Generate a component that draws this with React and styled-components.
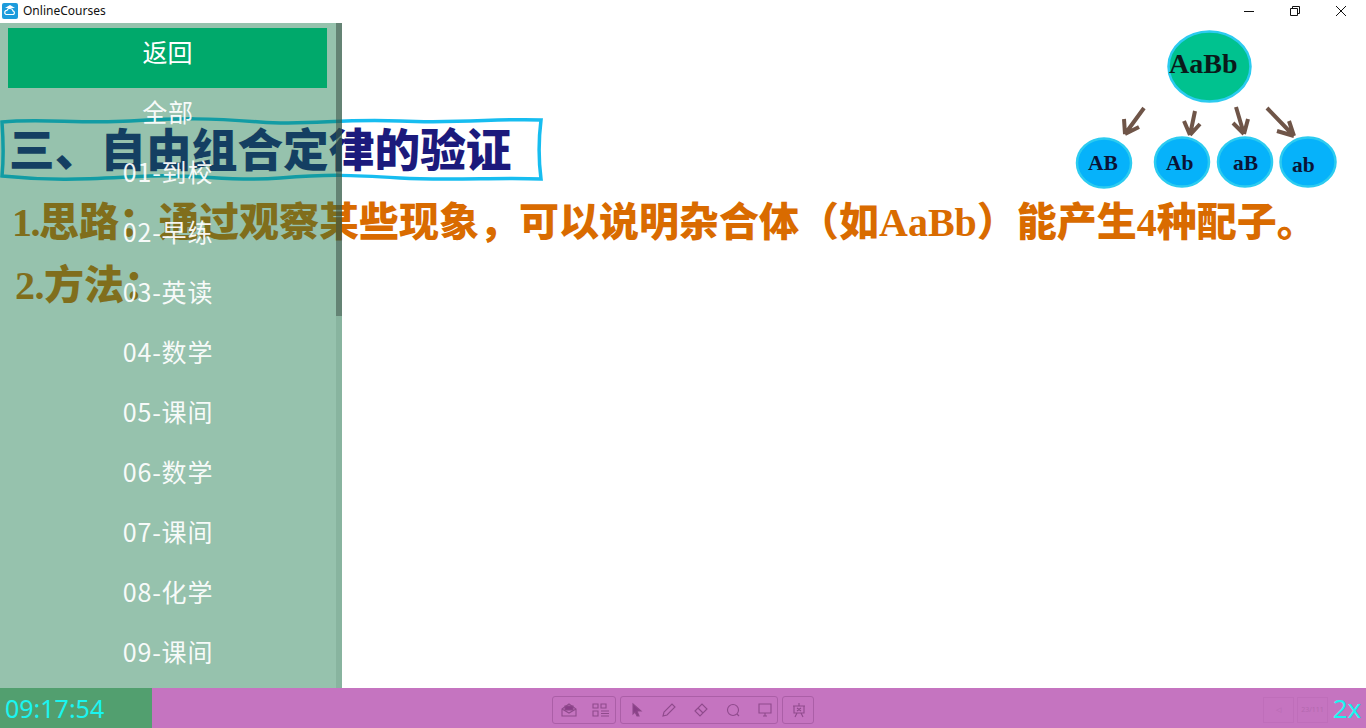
import React from 'react'
import styled, { createGlobalStyle } from 'styled-components'

const cjk = '"Noto Sans CJK SC", "Noto Sans", sans-serif'
const serif = '"Liberation Serif", "Noto Serif CJK SC", serif'

const GlobalStyle = createGlobalStyle`
  html, body {
    margin: 0;
    padding: 0;
    background: #fff;
    overflow: hidden;
  }
`

const Window = styled.div`
  width: 1366px;
  height: 728px;
  display: flex;
  flex-direction: column;
  font-family: ${cjk};
  background: #fff;
`

const TitleBar = styled.div`
  height: 23px;
  flex: none;
  box-sizing: border-box;
  padding: 0 2px 2px 0;
  display: flex;
  align-items: center;
  background: #fff;
`

const AppName = styled.span`
  margin-left: 3px;
  font-family: "Noto Sans", sans-serif;
  font-size: 12px;
  color: #111;
  flex: 1;
`

const WinButton = styled.div`
  width: 46px;
  height: 21px;
  display: flex;
  align-items: center;
  justify-content: center;
`

const Stage = styled.div`
  flex: 1;
  position: relative;
  overflow: hidden;
  background: #fff;
`

const HeadingBox = styled.svg`
  position: absolute;
  left: 0;
  top: 93px;
`

const Heading = styled.div`
  position: absolute;
  left: 9px;
  top: 94px;
  font-size: 45.7px;
  line-height: 60px;
  font-weight: 900;
  color: #1c1a7c;
  white-space: nowrap;
`

const Point = styled.div`
  position: absolute;
  left: ${(p) => p.x}px;
  top: ${(p) => p.y}px;
  font-size: 40px;
  line-height: 46px;
  font-weight: 900;
  color: ${(p) => p.color};
  white-space: nowrap;
`

const Latin = styled.span`
  font-family: ${serif};
  font-weight: 700;
  letter-spacing: ${(p) => p.tight || 0}px;
`

const Tree = styled.svg`
  position: absolute;
  left: 1060px;
  top: -23px;
`

const Sidebar = styled.div`
  position: absolute;
  left: 0;
  top: 0;
  bottom: 0;
  width: 342px;
  background: rgba(11, 113, 65, 0.43);
  overflow: hidden;
`

const Thumb = styled.div`
  position: absolute;
  right: 0;
  top: 0;
  width: 6px;
  height: 293px;
  background: rgba(60, 80, 70, 0.55);
`

const Track = styled.div`
  position: absolute;
  right: 0;
  top: 293px;
  bottom: 0;
  width: 6px;
  background: rgba(60, 100, 80, 0.15);
`

const BackButton = styled.div`
  margin: 5px 0 0 8px;
  width: 319px;
  height: 60px;
  box-sizing: border-box;
  padding-bottom: 14px;
  display: flex;
  align-items: center;
  justify-content: center;
  background: #00a96b;
  color: #fff;
  font-size: 25px;
`

const MenuItem = styled.div`
  width: 336px;
  height: 60px;
  box-sizing: border-box;
  padding-bottom: 14px;
  display: flex;
  align-items: center;
  justify-content: center;
  color: #fff;
  font-size: 25px;
  letter-spacing: 0.8px;
  opacity: 0.93;
`

const BottomBar = styled.div`
  height: 40px;
  flex: none;
  display: flex;
  align-items: center;
  background: #c574c0;
  position: relative;
`

const Clock = styled.div`
  width: 152px;
  height: 40px;
  flex: none;
  box-sizing: border-box;
  padding-left: 5px;
  display: flex;
  align-items: center;
  background: #529f6f;
  color: #1af5f0;
  font-family: "Noto Sans", sans-serif;
  font-size: 25px;
`

const Tools = styled.div`
  flex: 1;
  display: flex;
  gap: 4px;
  margin-left: 400px;
  padding-top: 3px;
`

const ToolGroup = styled.div`
  width: ${(p) => p.w}px;
  height: 28px;
  display: flex;
  align-items: center;
  box-sizing: border-box;
  border: 1px solid #ab5fa7;
  border-radius: 3px;
`

const ToolIcon = styled.svg`
  width: 32px;
  height: 20px;
  flex: none;
  fill: none;
  stroke: #8f4a8c;
  stroke-width: 1.1;
`

const PagerRow = styled.div`
  display: flex;
  gap: 3px;
  padding-top: 3px;
`

const PageBox = styled.div`
  width: 31px;
  height: 26px;
  box-sizing: border-box;
  border: 1px solid #bf6eba;
  display: flex;
  align-items: center;
  justify-content: center;
  font-size: 7px;
  color: #b468af;
  font-family: "Noto Sans", sans-serif;
`

const Speed = styled.div`
  width: 38px;
  text-align: center;
  color: #1af5f0;
  font-family: "Noto Sans", sans-serif;
  font-size: 26px;
`

const menu = ['全部', '01-到校', '02-早练', '03-英读', '04-数学', '05-课间', '06-数学', '07-课间', '08-化学', '09-课间']

function Bubble({ cx, cy, rx, ry, label, tx, ty, fill, size, ink = '#0a1436' }) {
  return (
    <g>
      <ellipse cx={cx} cy={cy} rx={rx} ry={ry} fill={fill} stroke="#2ccbf0" strokeWidth="2.5" />
      <text x={tx} y={ty} fontFamily='"Liberation Serif", serif' fontWeight="700" fontSize={size} fill={ink}>{label}</text>
    </g>
  )
}

function Arrow({ d }) {
  return <path d={d} fill="none" stroke="#6f5548" strokeWidth="4" />
}

export default function App() {
  return (
    <Window>
      <GlobalStyle />
      <TitleBar>
        <svg width="18" height="18" viewBox="0 0 18 18" style={{ marginLeft: 2 }}>
          <rect width="16" height="16" y="1" rx="2" fill="#1d9bdc" />
          <path d="M3 6 L8 3 L13 6 Z" fill="#fff" />
          <path d="M4 12.5 a2.2 2.2 0 0 1 1-4.2 a3.2 3.2 0 0 1 6 .6 a2 2 0 0 1 .5 3.6 Z" fill="none" stroke="#fff" strokeWidth="1.2" />
        </svg>
        <AppName>OnlineCourses</AppName>
        <WinButton>
          <svg width="12" height="12"><path d="M1 6.5 H11" stroke="#111" /></svg>
        </WinButton>
        <WinButton>
          <svg width="12" height="12" fill="none" stroke="#111"><path d="M1.5 3.5 H8.5 V10.5 H1.5 Z M3.5 3.5 V1.5 H10.5 V8.5 H8.5" /></svg>
        </WinButton>
        <WinButton>
          <svg width="12" height="12" stroke="#111"><path d="M1 1 L11 11 M11 1 L1 11" /></svg>
        </WinButton>
      </TitleBar>
      <Stage>
        <HeadingBox width="546" height="70">
          <path
            d="M2 6 C40 2 80 8 130 5 S210 2 260 6 S340 2 400 5 S500 2 541 4 C539 20 538 40 541 63 C500 61 450 65 400 62 S330 58 280 62 S200 58 150 60 S60 66 2 60 C4 40 3 20 2 6 Z"
            fill="none"
            stroke="#17bdf0"
            strokeWidth="3.5"
          />
        </HeadingBox>
        <Heading>三、自由组合定律的验证</Heading>
        <Point x={12} y={173} color="#d96b00">
          <Latin tight={-1.5}>1.</Latin>思路：通过观察某些现象，可以说明杂合体（如<Latin>AaBb</Latin>）能产生<Latin>4</Latin>种配子。
        </Point>
        <Point x={15} y={236} color="#d96b00">
          <Latin tight={-0.5}>2.</Latin>方法：
        </Point>
        <Tree width="300" height="192">
          <Bubble cx={149.5} cy={66.5} rx={41} ry={35} label="AaBb" tx={109} ty={73} fill="#00c28f" size={28} ink="#0a1a1a" />
          <Bubble cx={44} cy={163} rx={27} ry={24.5} label="AB" tx={28} ty={170} fill="#06b2fa" size={21.5} />
          <Bubble cx={122} cy={162} rx={27} ry={24.5} label="Ab" tx={106} ty={170} fill="#06b2fa" size={21.5} />
          <Bubble cx={185} cy={162} rx={27} ry={24.5} label="aB" tx={173} ty={170} fill="#06b2fa" size={21.5} />
          <Bubble cx={248} cy={162} rx={27.5} ry={24.5} label="ab" tx={232} ty={172} fill="#06b2fa" size={21.5} />
          <Arrow d="M84 108 L65 134 M65 134 L64 119 M65 134 L79 127" />
          <Arrow d="M135 111 L130 135 M130 135 L124 121 M130 135 L140 124" />
          <Arrow d="M176 107 L184 134 M184 134 L173 123 M184 134 L188 119" />
          <Arrow d="M207 108 L234 136 M234 136 L217 131 M234 136 L229 121" />
        </Tree>
        <Sidebar>
          <BackButton>返回</BackButton>
          {menu.map((m) => (
            <MenuItem key={m}>{m}</MenuItem>
          ))}
          <Track />
          <Thumb />
        </Sidebar>
      </Stage>
      <BottomBar>
        <Clock>09:17:54</Clock>
        <Tools>
          <ToolGroup w={64}>
            <ToolIcon viewBox="0 0 32 20">
              <path d="M9 9 L16 4 L23 9 V16 H9 Z M9 9 L16 13 L23 9" />
              <rect x="12" y="6" width="8" height="4" fill="#8a3e88" />
            </ToolIcon>
            <ToolIcon viewBox="0 0 32 20">
              <path d="M8 4 H13 V8 H8 Z M16 4 H21 V8 H16 Z M8 11 H13 V16 H8 Z M16 11 H24 M16 13.5 H24 M16 16 H24" />
            </ToolIcon>
          </ToolGroup>
          <ToolGroup w={158}>
            <ToolIcon viewBox="0 0 32 20">
              <path d="M12 4 L20 11 L16 11 L18 16 L16 16 L14 12 L12 14 Z" fill="#8a3e88" />
            </ToolIcon>
            <ToolIcon viewBox="0 0 32 20">
              <path d="M10 16 L11 12 L19 4 L22 7 L14 15 Z" />
            </ToolIcon>
            <ToolIcon viewBox="0 0 32 20">
              <path d="M10 11 L17 4 L22 9 L15 16 Z M13 8 L18 13" />
            </ToolIcon>
            <ToolIcon viewBox="0 0 32 20">
              <circle cx="16" cy="10" r="5.5" />
              <path d="M20 14 L22 16" />
            </ToolIcon>
            <ToolIcon viewBox="0 0 32 20">
              <path d="M10 4 H22 V13 H10 Z M16 13 V16 M14 16 H18" />
            </ToolIcon>
          </ToolGroup>
          <ToolGroup w={32}>
            <ToolIcon viewBox="0 0 32 20">
              <path d="M10 6 H22 M11 6 V13 H21 V6 M16 3 V6 M14 13 L12 17 M18 13 L20 17 M14 8 L18 11 M18 8 L14 11" />
            </ToolIcon>
          </ToolGroup>
        </Tools>
        <PagerRow>
          <PageBox>◁</PageBox>
          <PageBox>23/111</PageBox>
        </PagerRow>
        <Speed>2x</Speed>
      </BottomBar>
    </Window>
  )
}
